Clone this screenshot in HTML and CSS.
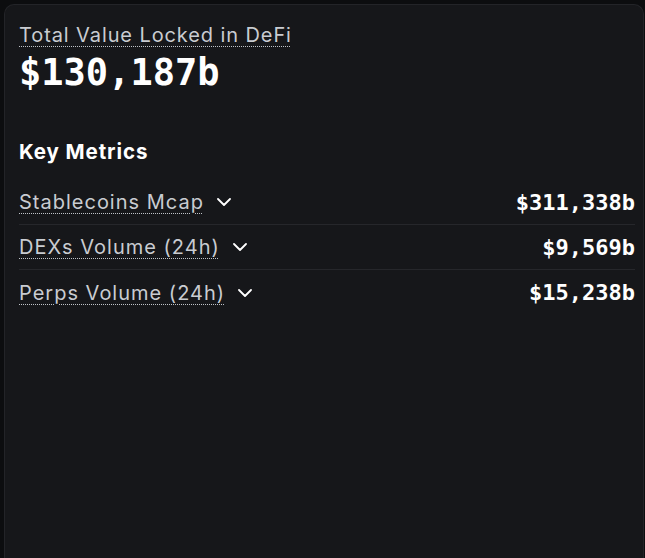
FILE: index.html
```html
<!DOCTYPE html>
<html>
<head>
<meta charset="utf-8">
<link rel="stylesheet" href="styles.css">
</head>
<body>
<div class="card">
  <div class="tvl">
    <span class="label dotted">Total Value Locked in DeFi</span>
    <div class="big">$130,187b</div>
  </div>
  <h2 class="heading">Key Metrics</h2>
  <div class="metrics">
    <div class="row">
      <span class="name"><span class="dotted">Stablecoins Mcap</span>
        <svg class="chev" viewBox="0 0 14 8" width="14" height="8"><path d="M1 1l6 6 6-6" fill="none" stroke="#fff" stroke-width="1.8" stroke-linecap="round" stroke-linejoin="round"/></svg></span>
      <span class="val">$311,338b</span>
    </div>
    <div class="row">
      <span class="name"><span class="dotted">DEXs Volume (24h)</span>
        <svg class="chev" viewBox="0 0 14 8" width="14" height="8"><path d="M1 1l6 6 6-6" fill="none" stroke="#fff" stroke-width="1.8" stroke-linecap="round" stroke-linejoin="round"/></svg></span>
      <span class="val">$9,569b</span>
    </div>
    <div class="row">
      <span class="name"><span class="dotted">Perps Volume (24h)</span>
        <svg class="chev" viewBox="0 0 14 8" width="14" height="8"><path d="M1 1l6 6 6-6" fill="none" stroke="#fff" stroke-width="1.8" stroke-linecap="round" stroke-linejoin="round"/></svg></span>
      <span class="val">$15,238b</span>
    </div>
  </div>
</div>
</body>
</html>
```
FILE: styles.css
```css
html, body {
  margin: 0;
  padding: 0;
  background: #0c0d0f;
  height: 100%;
  overflow: hidden;
}
body {
  padding: 4px 1px 0 4px;
  box-sizing: border-box;
  font-family: Inter, "Noto Sans", sans-serif;
  color: #fff;
}
.card {
  background: #16171a;
  border: 1px solid #232428;
  border-bottom: none;
  border-radius: 10px 10px 0 0;
  height: 554px;
  padding: 18px 8px 0 14px;
  box-sizing: border-box;
}
.tvl {
  display: flex;
  flex-direction: column;
  align-items: flex-start;
  gap: 4px;
}
.label {
  font-size: 20px;
  line-height: 24px;
  letter-spacing: 0.9px;
  color: #c9ccd1;
}
.dotted {
  text-decoration: underline dotted #bfc3c8;
  text-decoration-thickness: 1px;
  text-underline-offset: 4px;
}
.big {
  font-family: "DejaVu Sans Mono", monospace;
  font-weight: 700;
  font-size: 37px;
  line-height: 44px;
  color: #fff;
}
.heading {
  margin: 43px 0 0;
  font-size: 20.5px;
  line-height: 28px;
  letter-spacing: 0.9px;
  font-weight: 700;
}
.metrics {
  margin-top: 14px;
  display: flex;
  flex-direction: column;
}
.row {
  display: flex;
  justify-content: space-between;
  align-items: center;
  height: 45px;
  border-bottom: 1px solid #26272b;
  box-sizing: border-box;
}
.row:last-child { border-bottom: none; }
.name {
  display: flex;
  align-items: center;
  gap: 13px;
  font-size: 20px;
  letter-spacing: 1px;
  color: #c9ccd1;
}
.val {
  font-family: "DejaVu Sans Mono", monospace;
  font-weight: 700;
  font-size: 22px;
  color: #fff;
}
```
